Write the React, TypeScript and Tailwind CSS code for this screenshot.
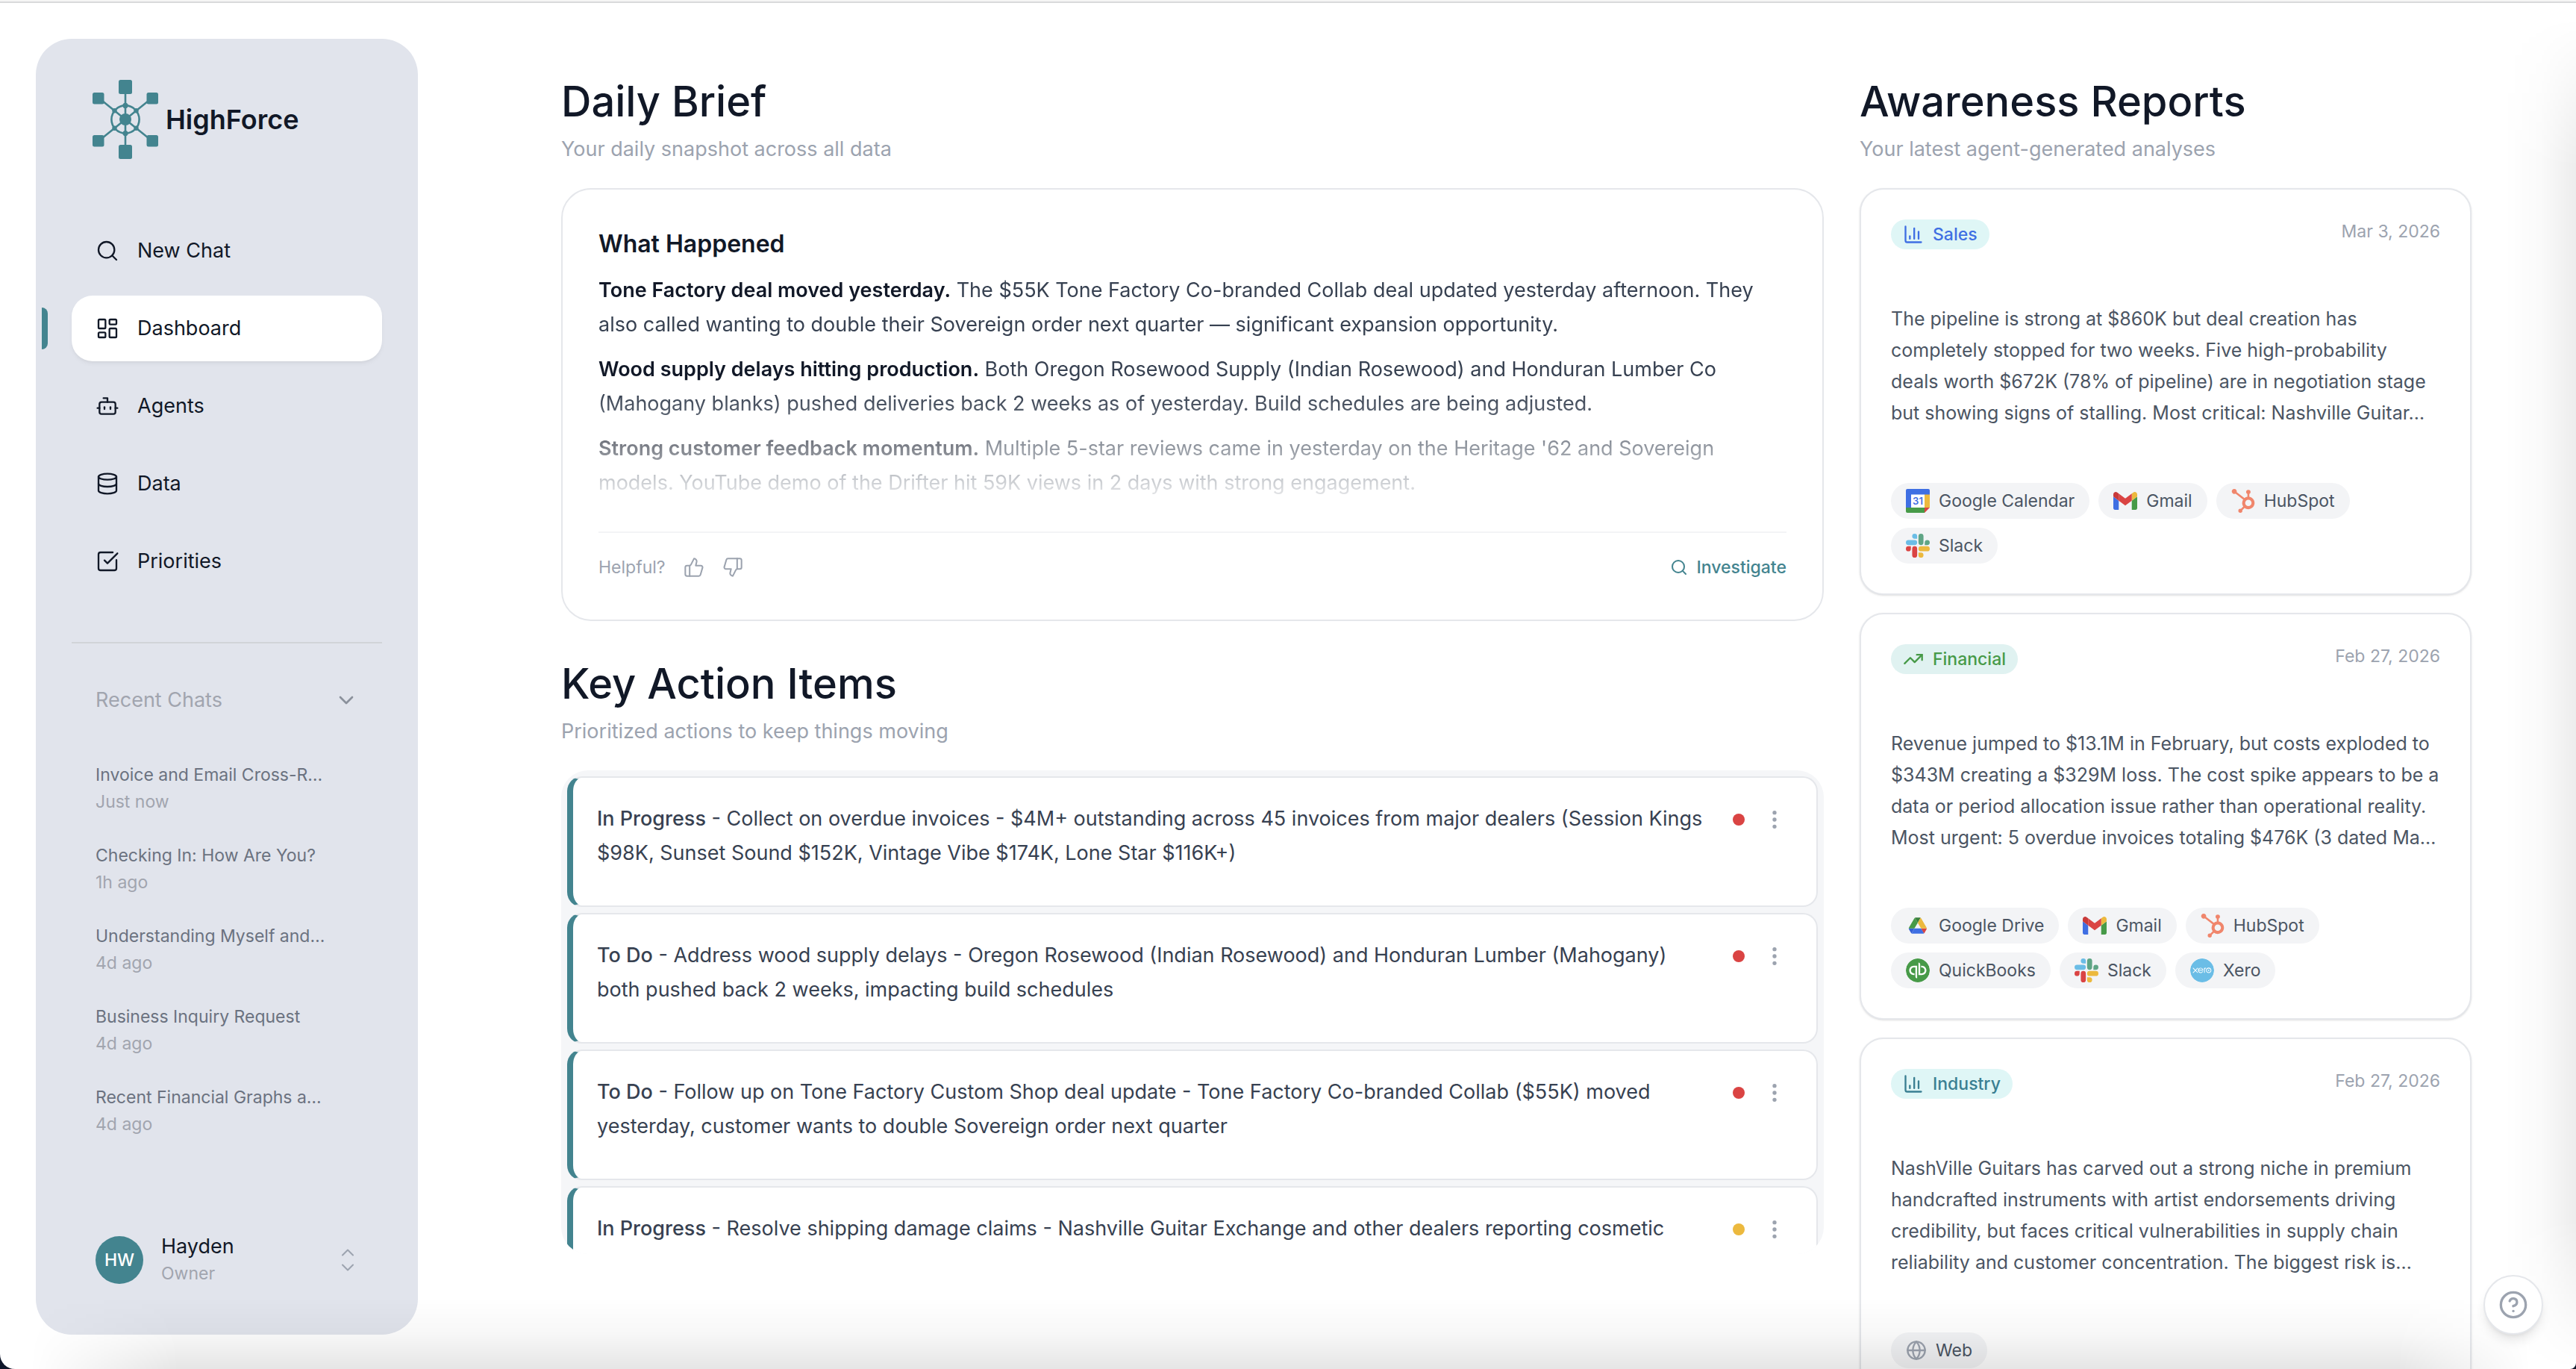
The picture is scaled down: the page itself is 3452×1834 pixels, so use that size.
import type { ComponentType, ReactNode } from "react";
import {
  Bot,
  ChartColumn,
  ChevronDown,
  ChevronUp,
  CircleHelp,
  Database,
  EllipsisVertical,
  Globe,
  LayoutDashboard,
  Search,
  SquareCheckBig,
  ThumbsDown,
  ThumbsUp,
  TrendingUp,
} from "lucide-react";
import { SiHubspot, SiQuickbooks, SiXero } from "react-icons/si";
import clsx from "clsx";

type IconType = ComponentType<{ className?: string; strokeWidth?: number }>;

interface NavItem {
  label: string;
  icon: IconType;
  active?: boolean;
}

interface Chat {
  title: string;
  when: string;
}

interface ActionItem {
  status: string;
  text: string;
  priority: "high" | "medium";
}

interface Report {
  category: string;
  icon: IconType;
  badge: string;
  date: string;
  summary: string;
  sources: string[];
}

const navItems: NavItem[] = [
  { label: "New Chat", icon: Search },
  { label: "Dashboard", icon: LayoutDashboard, active: true },
  { label: "Agents", icon: Bot },
  { label: "Data", icon: Database },
  { label: "Priorities", icon: SquareCheckBig },
];

const recentChats: Chat[] = [
  { title: "Invoice and Email Cross-R…", when: "Just now" },
  { title: "Checking In: How Are You?", when: "1h ago" },
  { title: "Understanding Myself and…", when: "4d ago" },
  { title: "Business Inquiry Request", when: "4d ago" },
  { title: "Recent Financial Graphs a…", when: "4d ago" },
];

const briefItems = [
  {
    lead: "Tone Factory deal moved yesterday.",
    text: "The $55K Tone Factory Co-branded Collab deal updated yesterday afternoon. They also called wanting to double their Sovereign order next quarter — significant expansion opportunity.",
  },
  {
    lead: "Wood supply delays hitting production.",
    text: "Both Oregon Rosewood Supply (Indian Rosewood) and Honduran Lumber Co (Mahogany blanks) pushed deliveries back 2 weeks as of yesterday. Build schedules are being adjusted.",
  },
  {
    lead: "Strong customer feedback momentum.",
    text: "Multiple 5-star reviews came in yesterday on the Heritage '62 and Sovereign models. YouTube demo of the Drifter hit 59K views in 2 days with strong engagement.",
  },
];

const actionItems: ActionItem[] = [
  {
    status: "In Progress",
    text: "Collect on overdue invoices - $4M+ outstanding across 45 invoices from major dealers (Session Kings $98K, Sunset Sound $152K, Vintage Vibe $174K, Lone Star $116K+)",
    priority: "high",
  },
  {
    status: "To Do",
    text: "Address wood supply delays - Oregon Rosewood (Indian Rosewood) and Honduran Lumber (Mahogany) both pushed back 2 weeks, impacting build schedules",
    priority: "high",
  },
  {
    status: "To Do",
    text: "Follow up on Tone Factory Custom Shop deal update - Tone Factory Co-branded Collab ($55K) moved yesterday, customer wants to double Sovereign order next quarter",
    priority: "high",
  },
  {
    status: "In Progress",
    text: "Resolve shipping damage claims - Nashville Guitar Exchange and other dealers reporting cosmetic",
    priority: "medium",
  },
];

const reports: Report[] = [
  {
    category: "Sales",
    icon: ChartColumn,
    badge: "bg-[#dff6f6] text-[#3f6fe3]",
    date: "Mar 3, 2026",
    summary:
      "The pipeline is strong at $860K but deal creation has completely stopped for two weeks. Five high-probability\ndeals worth $672K (78% of pipeline) are in negotiation stage\nbut showing signs of stalling. Most critical: Nashville Guitar…",
    sources: ["Google Calendar", "Gmail", "HubSpot", "Slack"],
  },
  {
    category: "Financial",
    icon: TrendingUp,
    badge: "bg-[#e0f2f1] text-[#479a48]",
    date: "Feb 27, 2026",
    summary:
      "Revenue jumped to $13.1M in February, but costs exploded to $343M creating a $329M loss. The cost spike appears to be a data or period allocation issue rather than operational reality. Most urgent: 5 overdue invoices totaling $476K (3 dated Ma…",
    sources: ["Google Drive", "Gmail", "HubSpot", "QuickBooks", "Slack", "Xero"],
  },
  {
    category: "Industry",
    icon: ChartColumn,
    badge: "bg-[#dff6f6] text-[#3a7f92]",
    date: "Feb 27, 2026",
    summary:
      "NashVille Guitars has carved out a strong niche in premium handcrafted instruments with artist endorsements driving credibility, but faces critical vulnerabilities in supply chain reliability and customer concentration. The biggest risk is…",
    sources: ["Web"],
  },
];

function LogoMark() {
  return (
    <svg viewBox="0 0 88 106" className="h-[106px] w-[88px] text-[#43848f]" fill="currentColor" aria-hidden="true">
      <g stroke="currentColor" strokeWidth="2.6" fill="none">
        <path d="M44 10V96M8 24L80 82M80 24L8 82" />
        <circle cx="44" cy="53" r="18.6" />
      </g>
      <circle cx="44" cy="53" r="8" />
      <circle cx="44" cy="34.4" r="3.6" />
      <circle cx="44" cy="71.6" r="3.6" />
      <circle cx="29.5" cy="41.3" r="3.2" />
      <circle cx="58.5" cy="41.3" r="3.2" />
      <circle cx="29.5" cy="64.7" r="3.2" />
      <circle cx="58.5" cy="64.7" r="3.2" />
      <rect x="35" y="0" width="18" height="19" rx="2.5" />
      <rect x="35" y="87" width="18" height="19" rx="2.5" />
      <rect x="0" y="17" width="15.5" height="15.5" rx="2.5" />
      <rect x="72.5" y="17" width="15.5" height="15.5" rx="2.5" />
      <rect x="0" y="74" width="15.5" height="15.5" rx="2.5" />
      <rect x="72.5" y="74" width="15.5" height="15.5" rx="2.5" />
    </svg>
  );
}

function GoogleCalendarIcon() {
  return (
    <svg viewBox="0 0 32 32" className="size-8" aria-hidden="true">
      <path fill="#3f6fe3" d="M2 0h28a2 2 0 0 1 2 2v6H7v17H0V2a2 2 0 0 1 2-2z" />
      <path fill="#ecb93e" d="M25 7.500h7V25h-7z" />
      <path fill="#479a48" d="M0 25h25v7H2a2 2 0 0 1-2-2z" />
      <path fill="#da4443" d="M25 25h7l-7 7z" />
      <path fill="#fff" d="M7 7.500h18V25H7z" />
      <text x="16" y="21" textAnchor="middle" fontSize="13" fontWeight="600" fill="#3f6fe3">
        31
      </text>
    </svg>
  );
}

function GmailIcon() {
  return (
    <svg viewBox="52 31 88 88" className="size-8" aria-hidden="true">
      <path fill="#3f6fe3" d="M58 108h14V74L52 59v43c0 3.320 2.690 6 6 6" />
      <path fill="#479a48" d="M120 108h14c3.320 0 6-2.690 6-6V59l-20 15" />
      <path fill="#ecb93e" d="M120 48v26l20-15v-8c0-7.420-8.470-11.650-14.400-7.200" />
      <path fill="#da4443" d="M72 74V48l24 18 24-18v26L96 92" />
      <path fill="#c93a3a" d="M52 51v8l20 15V48l-5.600-4.200c-5.940-4.450-14.400-.22-14.400 7.200" />
    </svg>
  );
}

function GoogleDriveIcon() {
  return (
    <svg viewBox="-14 -19 116 116" className="size-8" aria-hidden="true">
      <path fill="#3560d6" d="m6.600 66.850 3.850 6.650c.8 1.400 1.950 2.500 3.300 3.300l13.750-23.800h-27.500c0 1.550.4 3.100 1.200 4.500z" />
      <path fill="#479a48" d="m43.650 25-13.750-23.800c-1.350.8-2.500 1.900-3.300 3.300l-25.400 44a9.060 9.060 0 0 0-1.200 4.500h27.500z" />
      <path fill="#da4443" d="m73.550 76.800c1.350-.8 2.500-1.900 3.300-3.300l1.600-2.750 7.650-13.250c.8-1.400 1.200-2.950 1.200-4.500h-27.500l5.850 11.500z" />
      <path fill="#3a7f3c" d="m43.650 25 13.750-23.800c-1.350-.8-2.900-1.200-4.500-1.200h-18.500c-1.600 0-3.150.45-4.500 1.200z" />
      <path fill="#3f6fe3" d="m59.800 53h-32.300l-13.750 23.800c1.350.8 2.900 1.200 4.500 1.200h50.800c1.600 0 3.150-.45 4.500-1.200z" />
      <path fill="#ecb93e" d="m73.400 26.500-12.700-22c-.8-1.400-1.950-2.500-3.300-3.300l-13.750 23.800 16.150 28h27.450c0-1.550-.4-3.100-1.200-4.500z" />
    </svg>
  );
}

function SlackIcon() {
  return (
    <svg viewBox="0 0 24 24" className="size-8" aria-hidden="true">
      <path
        fill="#da4443"
        d="M5.042 15.165a2.528 2.528 0 0 1-2.520 2.523A2.528 2.528 0 0 1 0 15.165a2.527 2.527 0 0 1 2.522-2.520h2.520v2.520zM6.313 15.165a2.527 2.527 0 0 1 2.521-2.520 2.527 2.527 0 0 1 2.521 2.520v6.313A2.528 2.528 0 0 1 8.834 24a2.528 2.528 0 0 1-2.521-2.522v-6.313z"
      />
      <path
        fill="#6bbde6"
        d="M8.834 5.042a2.528 2.528 0 0 1-2.521-2.520A2.528 2.528 0 0 1 8.834 0a2.528 2.528 0 0 1 2.521 2.522v2.520H8.834zM8.834 6.313a2.528 2.528 0 0 1 2.521 2.521 2.528 2.528 0 0 1-2.521 2.521H2.522A2.528 2.528 0 0 1 0 8.834a2.528 2.528 0 0 1 2.522-2.521h6.312z"
      />
      <path
        fill="#5fa585"
        d="M18.956 8.834a2.528 2.528 0 0 1 2.522-2.521A2.528 2.528 0 0 1 24 8.834a2.528 2.528 0 0 1-2.522 2.521h-2.522V8.834zM17.688 8.834a2.528 2.528 0 0 1-2.523 2.521 2.527 2.527 0 0 1-2.520-2.521V2.522A2.527 2.527 0 0 1 15.165 0a2.528 2.528 0 0 1 2.523 2.522v6.312z"
      />
      <path
        fill="#ecb93e"
        d="M15.165 18.956a2.528 2.528 0 0 1 2.523 2.522A2.528 2.528 0 0 1 15.165 24a2.527 2.527 0 0 1-2.520-2.522v-2.522h2.520zM15.165 17.688a2.527 2.527 0 0 1-2.520-2.523 2.526 2.526 0 0 1 2.520-2.520h6.313A2.527 2.527 0 0 1 24 15.165a2.528 2.528 0 0 1-2.522 2.523h-6.313z"
      />
    </svg>
  );
}

const sourceIcons: Record<string, ReactNode> = {
  "Google Calendar": <GoogleCalendarIcon />,
  "Google Drive": <GoogleDriveIcon />,
  Gmail: <GmailIcon />,
  HubSpot: <SiHubspot className="size-8 text-[#f0866c]" />,
  Slack: <SlackIcon />,
  QuickBooks: <SiQuickbooks className="size-8 rounded-full bg-white text-[#479a48]" />,
  Xero: <SiXero className="size-8 rounded-full bg-white text-[#6bbde6]" />,
  Web: <Globe className="size-7 text-[#9ca3af]" strokeWidth={2} />,
};

function Sidebar() {
  return (
    <aside className="mt-12 mb-[46px] ml-12 flex w-[512px] shrink-0 flex-col rounded-[48px] bg-[#e1e4ec] px-12 pt-[55px] pb-16">
      <a href="#" className="flex items-center gap-2.5 px-7">
        <LogoMark />
        <span className="text-[36px] font-semibold text-[#111827]">HighForce</span>
      </a>

      <nav className="mt-[79px] flex flex-col gap-4">
        {navItems.map((item) => (
          <a
            key={item.label}
            href="#"
            aria-current={item.active ? "page" : undefined}
            className={clsx(
              "relative flex h-22 items-center gap-6 rounded-[28px] px-8 text-[27px] text-[#111827]",
              item.active && "bg-white shadow-md shadow-black/5"
            )}
          >
            {item.active && <span className="absolute top-4 -left-10 h-14 w-2 rounded-r-lg bg-[#43848f]" />}
            <item.icon className="size-8" strokeWidth={1.75} />
            {item.label}
          </a>
        ))}
      </nav>

      <hr className="mt-16 border-t-2 border-[#d1d4d8]" />

      <button type="button" className="mt-14 flex h-10 items-center justify-between px-8 text-[27px] text-[#a1a5af]">
        Recent Chats
        <ChevronDown className="size-8 text-[#8b919c]" strokeWidth={2} />
      </button>
      <ul className="mt-[62px] flex flex-col gap-9 px-8 text-[23px] leading-9">
        {recentChats.map((chat) => (
          <li key={chat.title}>
            <a href="#" className="block">
              <span className="block text-[#6b7280]">{chat.title}</span>
              <span className="block text-[#a1a5af]">{chat.when}</span>
            </a>
          </li>
        ))}
      </ul>

      <button type="button" className="mt-auto flex items-center px-8 text-left">
        <span className="flex size-16 items-center justify-center rounded-full bg-[#43848f] text-[23px] font-medium text-white">
          HW
        </span>
        <span className="ml-6 flex-1 leading-9">
          <span className="block text-[27px] text-[#111827]">Hayden</span>
          <span className="block text-[23px] text-[#a1a5af]">Owner</span>
        </span>
        <span className="flex flex-col text-[#9ca3af]">
          <ChevronUp className="size-7" strokeWidth={1.75} />
          <ChevronDown className="-mt-2 size-7" strokeWidth={1.75} />
        </span>
      </button>
    </aside>
  );
}

function SectionHeading({ title, subtitle }: { title: string; subtitle: string }) {
  return (
    <div>
      <h2 className="text-[56px] leading-[72px] font-medium text-[#111827]">{title}</h2>
      <p className="mt-2 text-[27px] leading-10 text-[#9ca3af]">{subtitle}</p>
    </div>
  );
}

function DailyBrief() {
  return (
    <section>
      <SectionHeading title="Daily Brief" subtitle="Your daily snapshot across all data" />
      <div className="mt-8 rounded-[40px] border-2 border-[#e5e7eb] bg-white px-12 pt-[50px] pb-[52px]">
        <h3 className="text-[32px] leading-[46px] font-semibold text-[#111827]">What Happened</h3>
        <div className="mt-4 space-y-3.5 pb-4 text-[27px] leading-[46px] text-[#374151] [mask-image:linear-gradient(to_bottom,black_calc(100%-160px),transparent)]">
          {briefItems.map((item) => (
            <p key={item.lead}>
              <strong className="font-semibold text-[#111827]">{item.lead}</strong> {item.text}
            </p>
          ))}
        </div>
        <div className="mt-[26px] flex items-center justify-between border-t-2 border-[#f3f4f6] pt-7">
          <div className="flex h-9 items-center text-[23px] text-[#9ca3af]">
            Helpful?
            <button type="button" aria-label="Helpful" className="ml-6">
              <ThumbsUp className="size-7" strokeWidth={1.75} />
            </button>
            <button type="button" aria-label="Not helpful" className="ml-6">
              <ThumbsDown className="size-7" strokeWidth={1.75} />
            </button>
          </div>
          <button type="button" className="flex items-center gap-3 text-[23px] font-medium text-[#43848f]">
            <Search className="size-6" strokeWidth={2} />
            Investigate
          </button>
        </div>
      </div>
    </section>
  );
}

function KeyActionItems() {
  return (
    <section className="mt-12">
      <SectionHeading title="Key Action Items" subtitle="Prioritized actions to keep things moving" />
      <ul className="mt-8 flex max-h-[648px] flex-col gap-2 overflow-hidden rounded-[36px] bg-[#f5f6f8] p-2">
        {actionItems.map((item) => (
          <li
            key={item.text}
            className="flex shrink-0 items-start rounded-[20px] border-2 border-l-8 border-[#e5e7eb] border-l-[#43848f] bg-white pt-8 pr-10 pb-[47px] pl-8"
          >
            <p className="flex-1 text-[27px] leading-[46px] text-[#374151]">
              <span className="font-medium">{item.status}</span> - {item.text}
            </p>
            <span
              className={clsx(
                "mt-4 ml-6 size-4 rounded-full",
                item.priority === "high" ? "bg-[#da4443]" : "bg-[#ecb93e]"
              )}
            />
            <button type="button" aria-label="Item options" className="mt-2 ml-6 text-[#9ca3af]">
              <EllipsisVertical className="size-8" />
            </button>
          </li>
        ))}
      </ul>
    </section>
  );
}

function ReportCard({ report }: { report: Report }) {
  return (
    <article className="rounded-[32px] border-2 border-[#e5e7eb] bg-white p-10 shadow-sm">
      <div className="flex items-start justify-between">
        <span className={clsx("flex h-10 items-center gap-3 rounded-full px-4 text-[23px] font-medium", report.badge)}>
          <report.icon className="size-7" strokeWidth={2} />
          {report.category}
        </span>
        <time className="text-[23px] leading-8 text-[#9ca3af]">{report.date}</time>
      </div>
      <p className="mt-18 text-[25px] leading-[42px] whitespace-pre-line text-[#4b5563]">{report.summary}</p>
      <ul className="mt-[73px] flex flex-wrap gap-3">
        {report.sources.map((source) => (
          <li key={source} className="flex h-12 items-center gap-3 rounded-full bg-[#f3f4f6] px-5 text-[23px] text-[#4b5563]">
            {sourceIcons[source]}
            {source}
          </li>
        ))}
      </ul>
    </article>
  );
}

function AwarenessReports() {
  return (
    <section className="w-[820px] shrink-0">
      <SectionHeading title="Awareness Reports" subtitle="Your latest agent-generated analyses" />
      <div className="mt-8 flex flex-col gap-6">
        {reports.map((report) => (
          <ReportCard key={report.category} report={report} />
        ))}
      </div>
    </section>
  );
}

export default function App() {
  return (
    <div className="h-screen bg-[#0f172a] font-['Inter','Liberation_Sans',sans-serif]">
      <div className="relative flex h-full flex-col overflow-hidden rounded-br-lg rounded-bl-[20px] bg-white">
        <div className="h-1 shrink-0 border-b-2 border-[#d9dadb] bg-[#f5f5f5]" />
        <div className="flex min-h-0 flex-1">
          <Sidebar />
          <main className="ml-[52px] flex min-w-0 flex-1 items-start gap-12 overflow-hidden px-[140px] pt-24">
            <div className="min-w-0 flex-1">
              <DailyBrief />
              <KeyActionItems />
            </div>
            <AwarenessReports />
          </main>
        </div>

        {/* soft shading along the bottom and right edges */}
        <div className="pointer-events-none absolute inset-x-0 bottom-0 h-24 bg-linear-to-t from-black/10 via-black/3 to-transparent [mask-image:linear-gradient(to_right,transparent_40px,black_240px,black_calc(100%-240px),transparent_calc(100%-60px))]" />
        <div className="pointer-events-none absolute top-1 right-0 bottom-0 w-24 bg-linear-to-l from-black/7 via-black/2 to-transparent [mask-image:linear-gradient(to_bottom,transparent_20px,black_220px,black_calc(100%-200px),transparent)]" />

        <button
          type="button"
          aria-label="Help"
          className="absolute right-11 bottom-[46px] flex size-20 items-center justify-center rounded-full border-2 border-[#e5e7eb] bg-white text-[#9ca3af] shadow-lg shadow-black/10"
        >
          <CircleHelp className="size-10" strokeWidth={2} />
        </button>
      </div>
    </div>
  );
}
